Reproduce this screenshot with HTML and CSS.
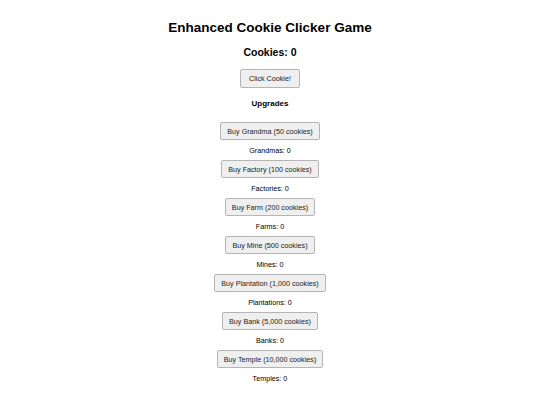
FILE: index.html
```html
<!DOCTYPE html>
<html lang="en">
<head>
  <meta charset="UTF-8" />
  <meta name="viewport" content="width=device-width, initial-scale=1" />
  <title>Enhanced Cookie Clicker Game</title>
  <link rel="stylesheet" href="styles.css">
</head>
<body>

  <h1>Enhanced Cookie Clicker Game</h1>
  <h2 id="cookieCount">Cookies: 0</h2>
  <button class="btn click-btn">Click Cookie!</button>

  <h3>Upgrades</h3>

  <div class="upgrades">
    <div class="upgrade">
      <button class="btn">Buy Grandma (50 cookies)</button>
      <p class="count">Grandmas: 0</p>
    </div>
    <div class="upgrade">
      <button class="btn">Buy Factory (100 cookies)</button>
      <p class="count">Factories: 0</p>
    </div>
    <div class="upgrade">
      <button class="btn">Buy Farm (200 cookies)</button>
      <p class="count">Farms: 0</p>
    </div>
    <div class="upgrade">
      <button class="btn">Buy Mine (500 cookies)</button>
      <p class="count">Mines: 0</p>
    </div>
    <div class="upgrade">
      <button class="btn">Buy Plantation (1,000 cookies)</button>
      <p class="count">Plantations: 0</p>
    </div>
    <div class="upgrade">
      <button class="btn">Buy Bank (5,000 cookies)</button>
      <p class="count">Banks: 0</p>
    </div>
    <div class="upgrade">
      <button class="btn">Buy Temple (10,000 cookies)</button>
      <p class="count">Temples: 0</p>
    </div>
  </div>

</body>
</html>
```

FILE: styles.css
```css
body {
  margin: 0;
  padding-top: 20px;
  font-family: 'Liberation Sans', Arial, sans-serif;
  color: #000;
  background: #fff;
  display: flex;
  flex-direction: column;
  align-items: center;
  text-align: center;
}

h1 {
  font-size: 13.5px;
  line-height: 16px;
  margin: 0;
}

h2 {
  font-size: 10.5px;
  line-height: 12px;
  margin: 10px 0 0;
}

h3 {
  font-size: 8px;
  line-height: 10px;
  margin: 11px 0 0;
}

.btn {
  font-family: inherit;
  font-size: 7.2px;
  height: 18px;
  padding: 0 6px;
  color: #222;
  background: #efefef;
  border: 1px solid #b5b5b5;
  border-radius: 2px;
  cursor: pointer;
}

.click-btn {
  height: 19px;
  padding: 0 8px;
  margin-top: 11px;
}

.upgrades {
  display: flex;
  flex-direction: column;
  align-items: center;
  margin-top: 13px;
}

.upgrade {
  display: flex;
  flex-direction: column;
  align-items: center;
}

.count {
  font-size: 7.2px;
  line-height: 10px;
  margin: 6px 0 4px;
}
```
